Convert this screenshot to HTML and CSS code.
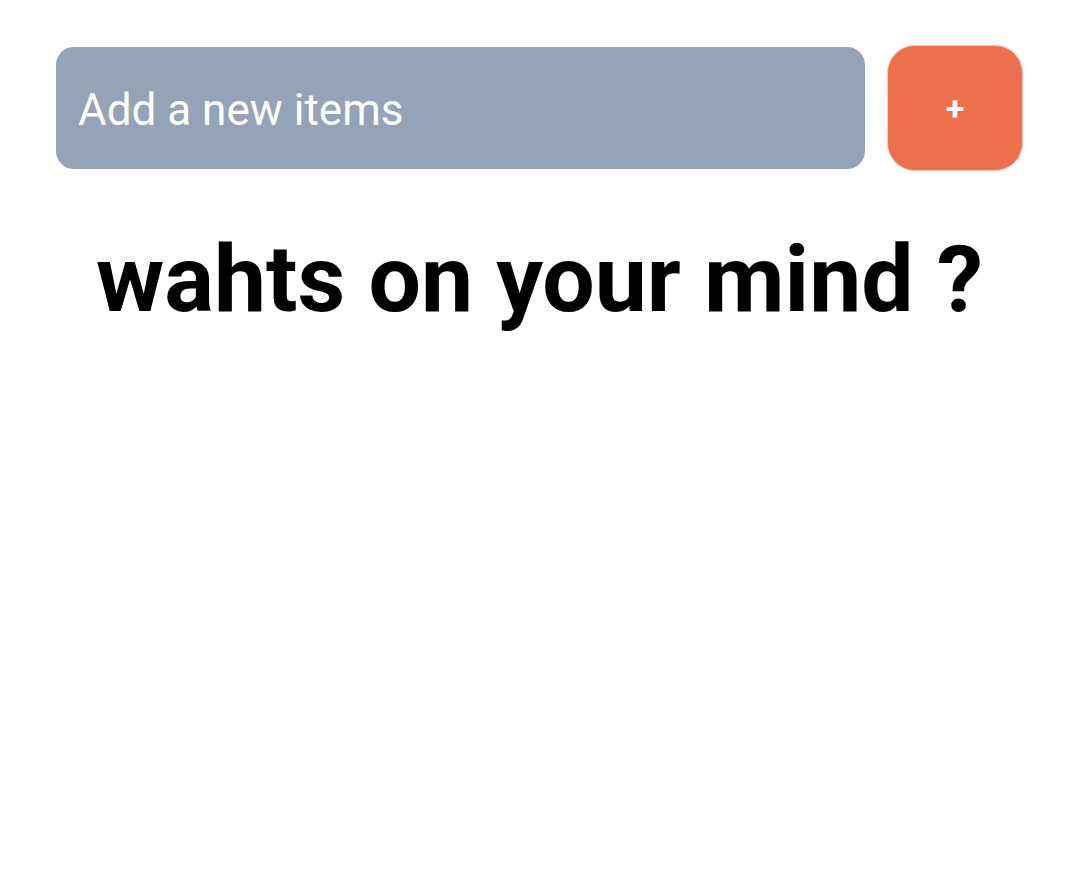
FILE: index.html
```html
<!DOCTYPE html>
<html lang="en">
<head>
<meta charset="utf-8">
<link rel="stylesheet" href="styles.css">
<title>Todo</title>
</head>
<body>
<main class="app">
  <form class="add-row">
    <input class="add-input" type="text" placeholder="Add a new items">
    <button class="add-btn" type="button">+</button>
  </form>
  <h1 class="prompt">wahts on your mind ?</h1>
</main>
</body>
</html>
```
FILE: styles.css
```css
html, body {
  margin: 0;
  padding: 0;
  background: #ffffff;
}
body {
  font-family: Roboto, "Liberation Sans", Arial, sans-serif;
}
.app {
  padding: 45px 57px 0 56px;
}
.add-row {
  display: flex;
  align-items: center;
  gap: 22px;
  margin: 0;
}
.add-input {
  flex: 1;
  height: 122px;
  box-sizing: border-box;
  border: none;
  outline: none;
  border-radius: 18px;
  background: #94a3b8;
  padding: 4px 0 0 22px;
  font-family: Roboto, "Liberation Sans", Arial, sans-serif;
  font-size: 44px;
  color: #ffffff;
}
.add-input::placeholder {
  color: #ffffff;
  opacity: 1;
}
.add-btn {
  width: 136px;
  height: 126px;
  box-sizing: border-box;
  border: 1px solid #f7c3b2;
  border-radius: 28px;
  background: #ec6f4e;
  color: #ffffff;
  font-family: Roboto, "Liberation Sans", Arial, sans-serif;
  font-weight: 700;
  font-size: 34px;
  padding: 0;
  cursor: pointer;
}
.prompt {
  margin: 53px 0 0;
  text-align: center;
  font-size: 93px;
  font-weight: 700;
  color: #000000;
  line-height: 1.2;
}
```
